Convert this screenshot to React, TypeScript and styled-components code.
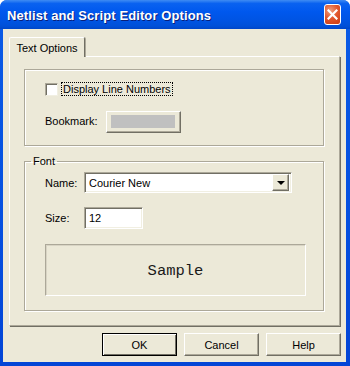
import styled, { createGlobalStyle, css } from "styled-components";

const GlobalStyle = createGlobalStyle`
  html, body {
    margin: 0;
    padding: 0;
    background: #ffffff;
  }
  body {
    font-family: "Liberation Sans", Arial, sans-serif;
    font-size: 11px;
    color: #000000;
  }
`;

const Window = styled.div`
  width: 350px;
  height: 366px;
  box-sizing: border-box;
  display: flex;
  flex-direction: column;
  background: linear-gradient(180deg, #0a5be6 0%, #0550e0 60%, #0345d6 100%);
  border-radius: 7px 7px 0 0;
  overflow: hidden;
`;

const TitleBar = styled.div`
  height: 29px;
  flex: none;
  display: flex;
  align-items: center;
  justify-content: space-between;
  padding: 0 9px 0 7px;
  background: linear-gradient(
    180deg,
    #3f8cf3 0%,
    #0a62f0 12%,
    #0058ee 40%,
    #0054e3 70%,
    #0050d8 90%,
    #0046c8 100%
  );
`;

const Title = styled.div`
  color: #ffffff;
  font-family: "Liberation Sans", Arial, sans-serif;
  font-weight: bold;
  font-size: 13px;
  letter-spacing: 0.1px;
  text-shadow: 1px 1px 0 #0a1f7a;
  white-space: nowrap;
  padding-top: 1px;
`;

const CloseButton = styled.div`
  width: 17px;
  height: 21px;
  box-sizing: border-box;
  border: 1px solid #ffffff;
  border-radius: 3px;
  background: radial-gradient(circle at 35% 30%, #f0a080 0%, #e2582e 45%, #c83a12 100%);
  display: flex;
  align-items: center;
  justify-content: center;
`;

const Client = styled.div`
  flex: 1;
  margin: 0 4px 4px 3px;
  background: #ece9d8;
  display: flex;
  flex-direction: column;
  padding: 8px 5px 6px 6px;
`;

const TabStrip = styled.div`
  display: flex;
  height: 20px;
  position: relative;
  z-index: 1;
`;

const Tab = styled.div`
  width: 76px;
  height: 20px;
  box-sizing: border-box;
  border-top: 1px solid #ffffff;
  border-left: 1px solid #ffffff;
  border-right: 1px solid #716f64;
  box-shadow: 1px 0 0 #aca899;
  border-radius: 2px 2px 0 0;
  background: #ece9d8;
  display: flex;
  align-items: center;
  justify-content: center;
  padding-top: 1px;
`;

const Panel = styled.div`
  height: 270px;
  box-sizing: border-box;
  margin-top: -1px;
  border-top: 1px solid #ffffff;
  border-left: 1px solid #ffffff;
  border-right: 1px solid #aca899;
  border-bottom: 1px solid #aca899;
  box-shadow: 1px 1px 0 #716f64;
  margin-right: 1px;
  display: flex;
  flex-direction: column;
  padding: 12px 15px 0 14px;
`;

const etched = css`
  border: 1px solid #aca899;
  box-shadow: 1px 1px 0 #ffffff, inset 1px 1px 0 #ffffff;
`;

const Group = styled.div`
  ${etched};
  height: 77px;
  box-sizing: border-box;
  display: flex;
  flex-direction: column;
  padding: 12px 0 0 20px;
`;

const FontGroup = styled.fieldset`
  ${etched};
  margin: 9px 0 0 0;
  padding: 0 17px 13px 20px;
  min-width: 0;
  box-sizing: border-box;
  height: 156px;
  border-radius: 0;
`;

const Legend = styled.legend`
  padding: 0 2px;
  margin-left: -14px;
  line-height: 13px;
`;

const CheckRow = styled.label`
  display: flex;
  align-items: center;
  gap: 4px;
  height: 14px;
`;

const CheckBox = styled.span`
  width: 13px;
  height: 13px;
  box-sizing: border-box;
  background: #ffffff;
  border-top: 1px solid #aca899;
  border-left: 1px solid #aca899;
  border-right: 1px solid #f1efe2;
  border-bottom: 1px solid #f1efe2;
  box-shadow: inset 1px 1px 0 #716f64;
`;

const FocusLabel = styled.span`
  outline: 1px dotted #000000;
  outline-offset: 0px;
  padding: 0 1px;
  line-height: 12px;
`;

const FieldRow = styled.div<{ $top: number }>`
  display: flex;
  align-items: center;
  margin-top: ${(p) => p.$top}px;
`;

const FieldLabel = styled.span<{ $w: number; $lift?: number }>`
  width: ${(p) => p.$w}px;
  flex: none;
  margin-bottom: ${(p) => p.$lift ?? 0}px;
`;

const raised = css`
  border-top: 1px solid #ffffff;
  border-left: 1px solid #ffffff;
  border-right: 1px solid #716f64;
  border-bottom: 1px solid #716f64;
  box-shadow: inset -1px -1px 0 #aca899;
  background: #ece9d8;
`;

const sunken = css`
  border-top: 1px solid #aca899;
  border-left: 1px solid #aca899;
  border-right: 1px solid #ffffff;
  border-bottom: 1px solid #ffffff;
  box-shadow: inset 1px 1px 0 #716f64, inset -1px -1px 0 #f1efe2;
  background: #ffffff;
`;

const ColorButton = styled.div`
  ${raised};
  width: 75px;
  height: 22px;
  box-sizing: border-box;
  padding: 3px 5px 4px 4px;
  display: flex;
`;

const Swatch = styled.div`
  flex: 1;
  background: #c0c0c0;
`;

const Combo = styled.div`
  ${sunken};
  width: 208px;
  height: 21px;
  box-sizing: border-box;
  display: flex;
  align-items: center;
  padding: 2px 2px 2px 4px;
`;

const ComboText = styled.span`
  flex: 1;
`;

const DropButton = styled.div`
  ${raised};
  width: 17px;
  height: 17px;
  box-sizing: border-box;
  display: flex;
  align-items: center;
  justify-content: center;
`;

const Arrow = styled.span`
  width: 0;
  height: 0;
  border-left: 4px solid transparent;
  border-right: 4px solid transparent;
  border-top: 4px solid #000000;
  margin-top: 1px;
`;

const TextBox = styled.div`
  ${sunken};
  width: 59px;
  height: 22px;
  box-sizing: border-box;
  display: flex;
  align-items: center;
  padding: 0 4px;
`;

const SampleBox = styled.div`
  margin-top: 15px;
  height: 52px;
  box-sizing: border-box;
  border-top: 1px solid #aca899;
  border-left: 1px solid #aca899;
  border-right: 1px solid #ffffff;
  border-bottom: 1px solid #ffffff;
  box-shadow: inset 1px 1px 0 #d8d4c4;
  display: flex;
  align-items: center;
  justify-content: center;
  font-family: "Liberation Mono", "Courier New", monospace;
  font-size: 15.5px;
  color: #1a1a1a;
  padding-top: 1px;
`;

const ButtonRow = styled.div`
  display: flex;
  justify-content: flex-end;
  gap: 7px;
  margin-top: 7px;
  padding-right: 0px;
`;

const DialogButton = styled.div<{ $default?: boolean }>`
  width: 75px;
  height: 23px;
  box-sizing: border-box;
  display: flex;
  align-items: center;
  justify-content: center;
  ${(p) =>
    p.$default
      ? css`
          border: 1px solid #000000;
          box-shadow: inset 1px 1px 0 #ffffff, inset -1px -1px 0 #716f64;
          background: #ece9d8;
        `
      : raised};
`;

export default function App() {
  return (
    <>
      <GlobalStyle />
      <Window>
        <TitleBar>
          <Title>Netlist and Script Editor Options</Title>
          <CloseButton>
            <svg width="11" height="11" viewBox="0 0 11 11">
              <path
                d="M1.5 1.5 L9.5 9.5 M9.5 1.5 L1.5 9.5"
                stroke="#ffffff"
                strokeWidth="2.2"
                strokeLinecap="square"
              />
            </svg>
          </CloseButton>
        </TitleBar>
        <Client>
          <TabStrip>
            <Tab>Text Options</Tab>
          </TabStrip>
          <Panel>
            <Group>
              <CheckRow>
                <CheckBox />
                <FocusLabel>Display Line Numbers</FocusLabel>
              </CheckRow>
              <FieldRow $top={15}>
                <FieldLabel $w={61} $lift={3}>
                  Bookmark:
                </FieldLabel>
                <ColorButton>
                  <Swatch />
                </ColorButton>
              </FieldRow>
            </Group>
            <FontGroup>
              <Legend>Font</Legend>
              <FieldRow $top={4}>
                <FieldLabel $w={39}>Name:</FieldLabel>
                <Combo>
                  <ComboText>Courier New</ComboText>
                  <DropButton>
                    <Arrow />
                  </DropButton>
                </Combo>
              </FieldRow>
              <FieldRow $top={14}>
                <FieldLabel $w={39}>Size:</FieldLabel>
                <TextBox>12</TextBox>
              </FieldRow>
              <SampleBox>Sample</SampleBox>
            </FontGroup>
          </Panel>
          <ButtonRow>
            <DialogButton $default>OK</DialogButton>
            <DialogButton>Cancel</DialogButton>
            <DialogButton>Help</DialogButton>
          </ButtonRow>
        </Client>
      </Window>
    </>
  );
}
